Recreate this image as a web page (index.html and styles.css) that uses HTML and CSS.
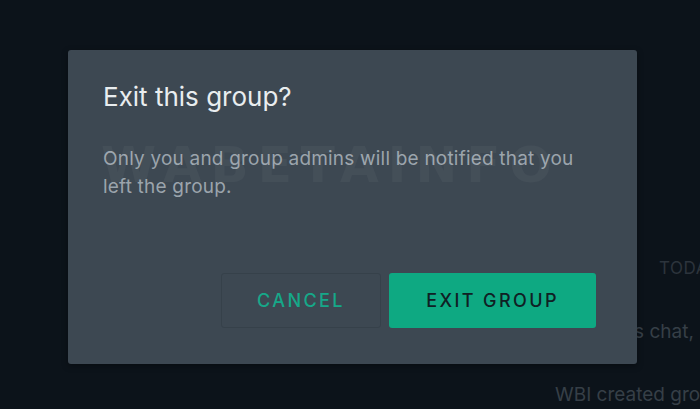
FILE: index.html
```
<!DOCTYPE html>
<html lang="en">
<head>
    <meta charset="UTF-8">
    <title>Exit group</title>
    <link rel="stylesheet" href="styles.css">
</head>
<body>
    <div class="app">
        <!-- chat behind the overlay -->
        <div class="chat-pane">
            <div class="chat-day">TODAY</div>
            <div class="chat-note">this chat, not even WhatsApp</div>
            <div class="chat-note created">WBI created group</div>
        </div>

        <div class="overlay">
            <div class="dialog">
                <div class="dialog-title">Exit this group?</div>
                <div class="dialog-body">
                    <span class="watermark">WABETAINFO</span>
                    Only you and group admins will be notified that you left the group.
                </div>
                <div class="dialog-actions">
                    <button class="btn btn-cancel">CANCEL</button>
                    <button class="btn btn-exit">EXIT GROUP</button>
                </div>
            </div>
        </div>
    </div>
</body>
</html>
```
FILE: styles.css
```
* {
    margin: 0;
    padding: 0;
    box-sizing: border-box;
}

html, body {
    width: 700px;
    height: 409px;
    overflow: hidden;
    background: #0c131a;
    font-family: 'Inter', 'Liberation Sans', sans-serif;
}

.app {
    position: relative;
    width: 100%;
    height: 100%;
    overflow: hidden;
}

.chat-pane {
    display: flex;
    flex-direction: column;
    padding: 258px 0 0 555px;
    color: #363f47;
    font-size: 19px;
    white-space: nowrap;
}

.chat-day {
    padding-left: 104px;
    font-size: 17px;
    letter-spacing: 0.5px;
    color: #2c343c;
}

.chat-note {
    margin-top: 42px;
    padding-left: 57px;
}

.chat-note.created {
    margin-top: 40px;
    padding-left: 0;
}

.overlay {
    position: absolute;
    top: 50px;
    left: 68px;
}

.dialog {
    width: 569px;
    height: 314px;
    background: #3d4852;
    border-radius: 3px;
    padding: 30px 35px 0 35px;
    box-shadow: 0 2px 6px rgba(0, 0, 0, 0.35);
}

.dialog-title {
    color: #e9edef;
    font-size: 26px;
    line-height: 34px;
}

.dialog-body {
    position: relative;
    margin-top: 31px;
    color: #9ba4ac;
    font-size: 19px;
    line-height: 28px;
    letter-spacing: 0.2px;
    width: 490px;
}

.watermark {
    position: absolute;
    left: -2px;
    top: 6px;
    font-family: 'DejaVu Sans', sans-serif;
    font-weight: bold;
    font-size: 50px;
    letter-spacing: 9px;
    color: rgba(255, 255, 255, 0.04);
    white-space: nowrap;
    z-index: 0;
}

.dialog-actions {
    display: flex;
    justify-content: flex-end;
    gap: 8px;
    margin-top: 72px;
    padding-right: 6px;
}

.btn {
    height: 55px;
    border-radius: 3px;
    font-family: inherit;
    font-size: 18px;
    font-weight: 500;
    letter-spacing: 2.4px;
    cursor: pointer;
}

.btn-cancel {
    width: 160px;
    background: transparent;
    border: 1px solid #36414a;
    color: #16a889;
}

.btn-exit {
    width: 207px;
    background: #0ea982;
    border: none;
    color: #102024;
}
```
